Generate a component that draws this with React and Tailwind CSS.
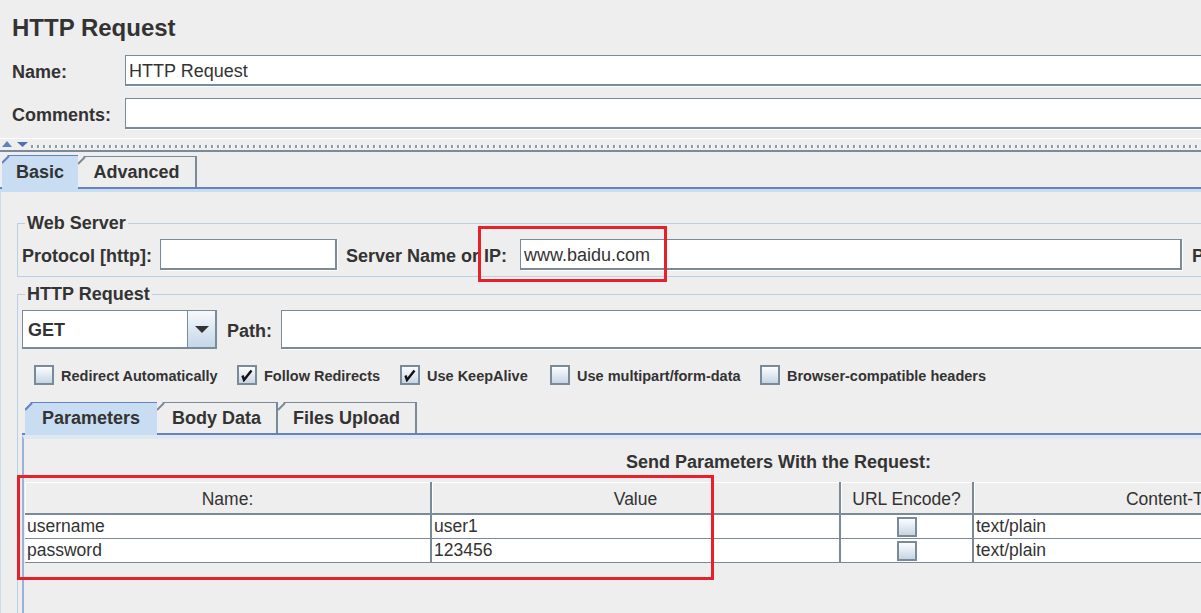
import React from "react";

const GRAY = "border-[#7a8a99]";

function Field({ className = "", children }) {
  return (
    <div
      className={`h-[31px] bg-white border-t border-l border-b-2 border-r-2 ${GRAY} shadow-[1px_1px_0_#ffffff] flex items-center pl-[3px] pt-[3px] text-[18px] whitespace-nowrap ${className}`}
    >
      {children}
    </div>
  );
}

function Label({ className = "", children }) {
  return <span className={`pt-[4px] text-[18px] font-bold whitespace-nowrap ${className}`}>{children}</span>;
}

function Tab({ label, selected, width, tall, short }) {
  return (
    <div
      className={`relative flex items-center justify-center font-bold text-[18px] [clip-path:polygon(6px_0,100%_0,100%_100%,0_100%,0_6px)] ${width} ${
        selected
          ? `bg-[#c8ddf2] border-t border-[#6382bf] z-10 -mb-[2px] ${tall}`
          : `bg-[#eeeeee] border-t border-r-2 ${GRAY} ${short}`
      }`}
    >
      <svg className="absolute left-0 top-0" width="8" height="8" viewBox="0 0 8 8">
        <line x1="0" y1="7" x2="7" y2="0" stroke={selected ? "#6382bf" : "#7a8a99"} strokeWidth="2" />
      </svg>
      <span className={selected ? "pb-[1px]" : "pt-[1px]"}>{label}</span>
    </div>
  );
}

function CheckBox({ checked }) {
  return (
    <span className={`w-[20px] h-[20px] shrink-0 border-2 ${GRAY} bg-linear-to-b from-[#fcfdfe] to-[#c6d5e5] flex items-center justify-center`}>
      {checked && (
        <svg width="14" height="14" viewBox="0 0 14 14">
          <path d="M2.5 7.5 L4 12 L11.5 2.5" fill="none" stroke="#111111" strokeWidth="2.4" strokeLinejoin="miter" />
        </svg>
      )}
    </span>
  );
}

function Option({ checked, label, width }) {
  return (
    <div className={`flex items-center gap-[7px] ${width}`}>
      <CheckBox checked={checked} />
      <span className="pt-[3px] text-[14.5px] font-bold whitespace-nowrap">{label}</span>
    </div>
  );
}

const columns = [
  { title: "Name:", w: "w-[407px]" },
  { title: "Value", w: "w-[409px]" },
  { title: "URL Encode?", w: "w-[133px]" },
  { title: "Content-Type", w: "w-[411px]" },
  { title: "Include Equals?", w: "w-[145px]" },
];

const params = [
  { name: "username", value: "user1", type: "text/plain" },
  { name: "password", value: "123456", type: "text/plain" },
];

export default function App() {
  return (
    <div className="relative w-[1201px] h-[613px] overflow-hidden bg-[#eeeeee] text-[#333333] font-['Liberation_Sans',Arial,sans-serif]">
      <div className="w-[1560px]">
        <h1 className="pt-[14px] pl-[12px] text-[24px] font-bold leading-[28px]">HTTP Request</h1>

        <div className="mt-[13px] flex items-center pl-[12px]">
          <Label className="w-[113px]">Name:</Label>
          <Field className="flex-1 mr-[12px]">HTTP Request</Field>
        </div>
        <div className="mt-[12px] flex items-center pl-[12px]">
          <Label className="w-[113px]">Comments:</Label>
          <Field className="flex-1 mr-[12px]" />
        </div>

        {/* split pane divider */}
        <div className="mt-[9px] mb-[3px] h-[14px] border-t border-white border-b-2 border-b-[#7a8a99] flex items-center pl-[2px]">
          <svg width="10" height="6" viewBox="0 0 10 6" className="mb-[2px]">
            <path d="M0 6 L5 0 L10 6 Z" fill="#6382bf" />
          </svg>
          <svg width="11" height="5" viewBox="0 0 11 5" className="ml-[5px] mb-[1px]">
            <path d="M0 0 L11 0 L5.5 5 Z" fill="#4d6fb3" />
          </svg>
          <div className="ml-[3px] flex-1 h-[3px] mt-[3px] bg-[image:repeating-linear-gradient(90deg,#8d9cac_0_2px,#ffffff_2px_3px,transparent_3px_6px)]" />
        </div>

        {/* outer tabs */}
        <div className="flex items-end h-[34px] border-b-2 border-[#6382bf] pl-[2px]">
          <Tab label="Basic" selected width="w-[76px]" tall="h-[34px]" />
          <Tab label="Advanced" width="w-[119px]" short="h-[31px]" />
        </div>

        <div className="border-t-[3px] border-l border-[#c8ddf2] pl-[16px] pr-[12px] pb-[40px]">
          <fieldset className="mt-[21px] border border-[#b8cfe5] px-[4px] pb-[6px]">
            <legend className="ml-[3px] px-[2px] text-[18px] font-bold leading-[20px]">Web Server</legend>
            <div className="mt-[6px] flex items-center">
              <Label className="w-[138px]">Protocol [http]:</Label>
              <Field className="w-[177px]" />
              <Label className="w-[183px] pl-[9px]">Server Name or IP:</Label>
              <Field className="w-[662px]">www.baidu.com</Field>
              <Label className="ml-[10px]">Port Number:</Label>
              <Field className="ml-[8px] w-[120px]" />
            </div>
          </fieldset>

          <fieldset className="mt-[7px] border border-[#b8cfe5] px-[4px] pb-[6px]">
            <legend className="ml-[3px] px-[2px] text-[18px] font-bold leading-[20px]">HTTP Request</legend>
            <div className="mt-[6px] flex items-center">
              <div className={`flex h-[39px] w-[195px] border-t border-l border-b-2 border-r-2 ${GRAY}`}>
                <div className="flex-1 bg-white flex items-center pl-[3px] pt-[2px] text-[18px] font-bold border-2 border-white">GET</div>
                <div className={`w-[28px] border-l ${GRAY} bg-linear-to-b from-[#f7f9fc] to-[#c4d6e9] flex items-center justify-center`}>
                  <svg width="14" height="7" viewBox="0 0 14 7">
                    <path d="M0 0 L14 0 L7 7 Z" fill="#333333" />
                  </svg>
                </div>
              </div>
              <Label className="ml-[10px] w-[54px]">Path:</Label>
              <Field className="flex-1 h-[39px]" />
            </div>

            <div className="mt-[16px] flex items-center h-[20px] pl-[12px]">
              <Option label="Redirect Automatically" width="w-[203px]" />
              <Option label="Follow Redirects" checked width="w-[163px]" />
              <Option label="Use KeepAlive" checked width="w-[150px]" />
              <Option label="Use multipart/form-data" width="w-[210px]" />
              <Option label="Browser-compatible headers" width="w-[260px]" />
            </div>

            {/* inner tabs */}
            <div className="mt-[17px] w-[1510px]">
              <div className="flex items-end h-[33px] border-b-2 border-[#6382bf] pl-[3px]">
                <Tab label="Parameters" selected width="w-[132px]" tall="h-[33px]" />
                <Tab label="Body Data" width="w-[121px]" short="h-[31px]" />
                <Tab label="Files Upload" width="w-[139px]" short="h-[31px]" />
              </div>
              <div className="border-t-4 border-t-[#dde8f3] border-l-2 border-l-[#9ab2da] pl-[1px] h-[220px]">
                <div className="mt-[13px] text-center text-[18px] font-bold leading-[20px]">
                  Send Parameters With the Request:
                </div>
                <div className="mt-[10px] w-[1505px]">
                  <div className={`flex h-[33px] border-b-2 ${GRAY}`}>
                    {columns.map((c) => (
                      <div
                        key={c.title}
                        className={`${c.w} h-full border-r-2 ${GRAY} shadow-[inset_1px_1px_0_#ffffff] flex items-center justify-center pt-[3px] text-[17.5px]`}
                      >
                        {c.title}
                      </div>
                    ))}
                  </div>
                  {params.map((p) => (
                    <div key={p.name} className={`flex h-[24px] bg-white border-b ${GRAY} text-[17.5px]`}>
                      <div className={`${columns[0].w} border-r-2 ${GRAY} pl-[2px] flex items-center`}>{p.name}</div>
                      <div className={`${columns[1].w} border-r-2 ${GRAY} pl-[2px] flex items-center`}>{p.value}</div>
                      <div className={`${columns[2].w} border-r-2 ${GRAY} flex items-center justify-center`}>
                        <CheckBox />
                      </div>
                      <div className={`${columns[3].w} border-r-2 ${GRAY} pl-[2px] flex items-center`}>{p.type}</div>
                      <div className={`${columns[4].w} border-r-2 ${GRAY} flex items-center justify-center`}>
                        <CheckBox checked />
                      </div>
                    </div>
                  ))}
                </div>
              </div>
            </div>
          </fieldset>
        </div>
      </div>

      {/* annotation boxes */}
      <div className="absolute left-[478px] top-[226px] w-[189px] h-[56px] border-[3px] border-[#e8202a]" />
      <div className="absolute left-[17px] top-[475px] w-[697px] h-[105px] border-[3px] border-[#e8202a]" />
    </div>
  );
}
